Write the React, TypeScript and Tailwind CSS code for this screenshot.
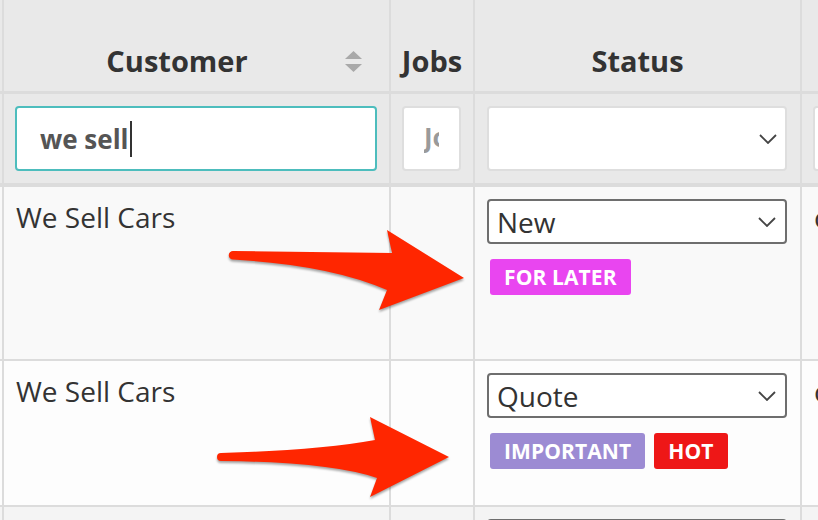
import React from 'react';

const font = "font-['Open_Sans','Noto_Sans',sans-serif]";

const SortIcon = () => (
  <svg width="17" height="21" viewBox="0 0 17 21" className="shrink-0">
    <polygon points="0,8 8.5,0 17,8" fill="#a9a9a9" />
    <polygon points="0,13 17,13 8.5,21" fill="#a9a9a9" />
  </svg>
);

const Chevron = () => (
  <svg width="18" height="10" viewBox="0 0 18 10" className="shrink-0">
    <polyline points="1,1 9,9 17,1" fill="none" stroke="#444" strokeWidth="1.8" />
  </svg>
);

const Badge = ({ label, color }: { label: string; color: string }) => (
  <span className={`inline-flex h-[36px] items-center rounded-[3px] px-[14px] text-[21px] font-bold leading-none tracking-[0.1px] text-white ${color}`}>
    {label}
  </span>
);

const StatusSelect = ({ value }: { value: string }) => (
  <div className="flex h-[45px] items-center justify-between rounded-[4px] border-2 border-[#6e6e6e] bg-white pl-[8px] pr-[9px]">
    <span className="text-[28px] leading-none text-[#333]">{value}</span>
    <Chevron />
  </div>
);

type Row = { customer: string; status: string; tags: { label: string; color: string }[]; height: string; bg: string };

const rows: Row[] = [
  { customer: 'We Sell Cars', status: 'New', tags: [{ label: 'FOR LATER', color: 'bg-[#e945f0]' }], height: 'h-[174px]', bg: 'bg-[#f9f9f9]' },
  {
    customer: 'We Sell Cars',
    status: 'Quote',
    tags: [
      { label: 'IMPORTANT', color: 'bg-[#9c8bd3]' },
      { label: 'HOT', color: 'bg-[#ee1717]' },
    ],
    height: 'h-[146px]',
    bg: 'bg-[#fdfdfd]',
  },
];

export default function App() {
  return (
    <div className={`relative h-[520px] w-[818px] overflow-hidden bg-[#f4f4f4] text-[#333] ${font}`}>
      {/* header */}
      <div className="flex h-[94px] border-b-[3px] border-[#dcdcdc] bg-[#e9e9e9]">
        <div className="w-[2px] shrink-0" />
        <div className="flex w-[387px] shrink-0 items-end border-l-2 border-[#dcdcdc] pb-[16px] pl-[5px] pr-[27px]">
          <span className="flex-1 text-center text-[29px] font-bold leading-none">Customer</span>
          <div className="mb-[3px]">
            <SortIcon />
          </div>
        </div>
        <div className="flex w-[84px] shrink-0 items-end justify-center border-l-2 border-[#dcdcdc] pb-[16px]">
          <span className="text-[29px] font-bold leading-none">Jobs</span>
        </div>
        <div className="flex w-[327px] shrink-0 items-end justify-center border-l-2 border-[#dcdcdc] pb-[16px]">
          <span className="text-[29px] font-bold leading-none">Status</span>
        </div>
        <div className="flex-1 border-l-2 border-[#dcdcdc]" />
      </div>

      {/* filter row */}
      <div className="flex h-[93px] border-b-4 border-[#dcdcdc] bg-[#e9e9e9]">
        <div className="w-[2px] shrink-0" />
        <div className="flex w-[387px] shrink-0 items-center border-l-2 border-[#dcdcdc] pl-[11px] pr-[12px]">
          <div className="flex h-[65px] w-full items-center rounded-[4px] border-2 border-[#4dbdbd] bg-white pl-[23px]">
            <span className="text-[26px] font-bold leading-none text-[#555]">we sell</span>
            <span className="ml-[1px] inline-block h-[36px] w-[2px] bg-[#333]" />
          </div>
        </div>
        <div className="flex w-[84px] shrink-0 items-center border-l-2 border-[#dcdcdc] pl-[11px] pr-[12px]">
          <div className="flex h-[65px] w-full items-center rounded-[4px] border-2 border-[#dedede] bg-white px-[20px]">
            <div className="w-full overflow-hidden">
              <span className="whitespace-nowrap text-[26px] font-bold leading-none text-[#9a9a9a]">Jobs</span>
            </div>
          </div>
        </div>
        <div className="flex w-[327px] shrink-0 items-center border-l-2 border-[#dcdcdc] pl-[12px] pr-[13px]">
          <div className="flex h-[65px] w-full items-center justify-end rounded-[4px] border-2 border-[#dedede] bg-white pr-[8px]">
            <Chevron />
          </div>
        </div>
        <div className="flex flex-1 items-center border-l-2 border-[#dcdcdc] pl-[11px]">
          <div className="h-[65px] w-[40px] shrink-0 rounded-[4px] border-2 border-[#dedede] bg-white" />
        </div>
      </div>

      {/* data rows */}
      {rows.map((row, i) => (
        <div key={i} className={`flex border-b-2 border-[#dcdcdc] ${row.height} ${row.bg}`}>
          <div className="w-[2px] shrink-0" />
          <div className="w-[387px] shrink-0 border-l-2 border-[#dcdcdc] pl-[12px] pt-[16px]">
            <span className="text-[28px] leading-none">{row.customer}</span>
          </div>
          <div className="w-[84px] shrink-0 border-l-2 border-[#dcdcdc]" />
          <div className="w-[327px] shrink-0 border-l-2 border-[#dcdcdc] pl-[12px] pr-[13px] pt-[12px]">
            <StatusSelect value={row.status} />
            <div className="mt-[15px] flex gap-[9px] pl-[3px]">
              {row.tags.map(t => (
                <Badge key={t.label} label={t.label} color={t.color} />
              ))}
            </div>
          </div>
          <div className="flex-1 overflow-hidden border-l-2 border-[#dcdcdc] pl-[12px] pt-[16px]">
            <span className="text-[28px] leading-none">c</span>
          </div>
        </div>
      ))}

      {/* third row, cut off */}
      <div className="flex h-[40px] bg-[#f4f4f4]">
        <div className="w-[2px] shrink-0" />
        <div className="w-[387px] shrink-0 border-l-2 border-[#dcdcdc]" />
        <div className="w-[84px] shrink-0 border-l-2 border-[#dcdcdc]" />
        <div className="w-[327px] shrink-0 border-l-2 border-[#dcdcdc] pl-[12px] pr-[13px] pt-[12px]">
          <StatusSelect value="" />
        </div>
        <div className="flex-1 border-l-2 border-[#dcdcdc]" />
      </div>

      {/* annotation arrows */}
      <svg className="pointer-events-none absolute left-0 top-0 drop-shadow-[0_2px_1px_rgba(0,0,0,0.35)]" width="818" height="520" viewBox="0 0 818 520">
        <path d="M233,251 L392,253 L387,230 L464,278 L379,310 L387,290 Q330,265 233,259.5 A4.25,4.25 0 0 1 233,251 Z" fill="#ff2600" />
        <path d="M221,453 Q320,450 375,440 L370,417 L449,457 L370,497 L377,478 Q330,462 221,461 A4,4 0 0 1 221,453 Z" fill="#ff2600" />
      </svg>
    </div>
  );
}
